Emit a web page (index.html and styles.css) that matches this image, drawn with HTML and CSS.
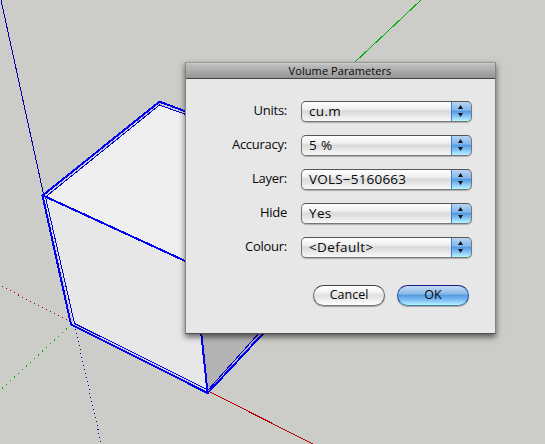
FILE: index.html
```html
<!DOCTYPE html>
<html lang="en">
<head>
<meta charset="utf-8">
<title>Volume Parameters</title>
<link rel="stylesheet" href="styles.css">
</head>
<body>
<main class="viewport">
<svg class="scene" width="545" height="444" viewBox="0 0 545 444" shape-rendering="crispEdges" aria-hidden="true">
  <path class="face-top" d="M45 197L159.500 104.500L300 157V320L187 262Z"/>
  <path class="face-front" d="M44 196L194 264L208 391L73.500 323.500Z"/>
  <path class="face-side" d="M194 264L320 270L208 391Z"/>
  <path class="axis blue" d="M1 0L43.500 194"/>
  <path class="axis green" d="M421 0L354 63"/>
  <path class="axis red" d="M208 391L313 444"/>
  <path class="axis red dots-red" d="M2 286.500L67 320"/>
  <path class="axis green dots-green" d="M2 388.500L67 328.600"/>
  <path class="axis blue dots-blue" d="M75.500 329L100.800 442"/>
  <path class="edge" d="M190 113L159.500 101.700L42.500 195.500L71 324.500L207.700 393L264.500 332"/>
  <path class="edge" d="M43 195.500L194 265L207.500 392"/>
  <path class="inner" d="M190 116L159.500 105L45.500 197L74.500 323.500L208 390L260 332"/>
</svg>
<form class="dialog">
  <h1 class="title"><span>Volume Parameters</span></h1>
  <div class="fields">
    <div class="row"><span class="label">Units:</span><div class="select"><span class="value">cu.m</span><i class="stepper"></i></div></div>
    <div class="row"><span class="label">Accuracy:</span><div class="select"><span class="value">5 %</span><i class="stepper"></i></div></div>
    <div class="row"><span class="label">Layer:</span><div class="select"><span class="value layer">VOLS−5160663</span><i class="stepper"></i></div></div>
    <div class="row"><span class="label">Hide</span><div class="select"><span class="value">Yes</span><i class="stepper"></i></div></div>
    <div class="row"><span class="label">Colour:</span><div class="select"><span class="value">&lt;Default&gt;</span><i class="stepper"></i></div></div>
  </div>
  <div class="actions">
    <button class="button" type="button">Cancel</button>
    <button class="button primary" type="button">OK</button>
  </div>
</form>
</main>
</body>
</html>
```
FILE: styles.css
```css
* { box-sizing: border-box; }
body { margin: 0; overflow: hidden; font: 13px/20px "Open Sans", "Noto Sans", sans-serif; color: #080808; }
.viewport { position: relative; width: 545px; height: 444px; background: #cccdc8; overflow: hidden; }
.scene { position: absolute; inset: 0; }
.face-top { fill: #efefef; }
.face-front { fill: #e7e7e7; }
.face-side { fill: #b3b3b3; }
.axis, .edge, .inner { fill: none; stroke-width: 1; }
.blue { stroke: #0000a5; }
.green { stroke: #00ad00; }
.red { stroke: #b50000; }
.dots-red { stroke-dasharray: 1 3.5; }
.dots-green { stroke-dasharray: 1.2 4.240; }
.dots-blue { stroke-dasharray: 1 3.100; }
.edge { stroke: #0000f5; stroke-width: 2; }
.inner { stroke: #0000d8; }

.dialog {
  position: absolute; left: 185px; top: 62px; width: 311px; height: 272px;
  border: 1px solid #838383; border-top-color: #999; border-bottom-color: #525252;
  background: #e7e7e7; background-clip: padding-box;
  box-shadow: 0 3px 6px rgba(0,0,0,.58);
}
.title {
  margin: 0; height: 16px; border-bottom: 1px solid #444;
  background: linear-gradient(#d0d0d0, #bcbcbc 2px, #969696);
  font-size: 11px; line-height: 16px; font-weight: 400; text-align: center;
}
.title span { display: inline-block; letter-spacing: .080px; white-space: nowrap; margin-right: 1px; }
.fields { display: flex; flex-direction: column; gap: 13px; padding: 22px 0 0 10px; }
.row { display: flex; height: 21px; gap: 14px; }
.label { width: 91px; text-align: right; line-height: 18px; white-space: nowrap; letter-spacing: -.250px; }
.select {
  width: 171px; height: 21px; display: flex; justify-content: space-between;
  border: 1px solid #777; border-top-color: #555; border-radius: 5px; overflow: hidden;
  background: linear-gradient(#fff 0, #f0f0f0 35%, #dadada 50%, #f8f8f8 100%);
  box-shadow: 0 1px 1px rgba(0,0,0,.25);
}
.value { padding-left: 7px; font-size: 13.500px; line-height: 18px; white-space: nowrap; letter-spacing: .35px; }
.layer { letter-spacing: .2px; }
.stepper {
  width: 21px; height: 21px; margin: -1px -1px 0 0; flex: none; position: relative;
  border: 1px solid #1746a0; border-left-color: #3c7ccb; border-top-color: #28398f; border-bottom-color: #5387a4; border-radius: 0 5px 5px 0;
  background: linear-gradient(#b9d5f3 0, #85b6ea 42%, #529be3 50%, #82bff5 72%, #b6f7ff 100%);
}
.stepper::before, .stepper::after { content: ""; position: absolute; left: 6px; width: 5px; height: 4px; background: #111; }
.stepper::before { top: 3px; clip-path: polygon(50% 0, 100% 100%, 0 100%); }
.stepper::after { top: 11px; clip-path: polygon(0 0, 100% 0, 50% 100%); }
.actions { display: flex; gap: 12px; padding: 27px 0 0 127px; }
.button {
  width: 72px; height: 21px; padding: 0 0 1px; border: 1px solid #666; border-top-color: #444; border-bottom-color: #777; border-radius: 11px;
  font: 12.500px/18px "Open Sans", "Noto Sans", sans-serif; color: #080808;
  background: linear-gradient(#fff 0, #f4f4f4 30%, #e0e0e0 50%, #fff 100%);
  box-shadow: 0 1px 1px rgba(0,0,0,.3);
}
.primary { border-color: #19197f #2451a5 #477b9c; background: linear-gradient(#c5ddf6 0, #8bbaea 40%, #559ee3 50%, #7dbaf3 72%, #b2f5ff 100%); }
```
